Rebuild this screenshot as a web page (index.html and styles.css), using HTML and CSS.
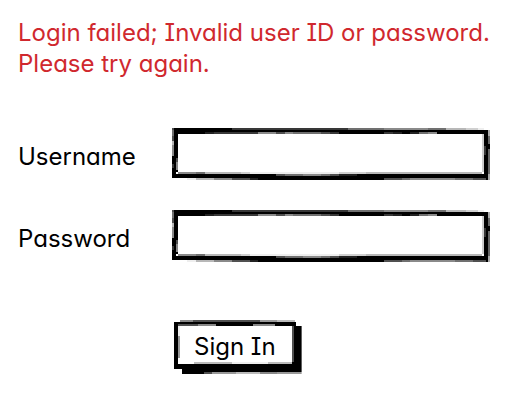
FILE: index.html
```html
<!DOCTYPE html>
<html lang="en">
<head>
<meta charset="utf-8">
<meta name="viewport" content="width=device-width, initial-scale=1">
<title>Sign In</title>
<link rel="stylesheet" href="styles.css">
</head>
<body>
<svg class="defs" aria-hidden="true">
  <symbol id="field-frame" viewBox="0 0 318 52" preserveAspectRatio="none">
    <path d="M2 0H60V2H316V52H86V50H0V28H2ZM6 6V44H4V46H312V6Z" fill="#000" fill-rule="evenodd"/>
    <path d="M312 6H310V44H312Z" fill="#ccc"/>
    <path d="M60 0H176V2H60ZM42 4H86V6H42ZM158 4H167V6H158ZM212 4H221V6H212ZM0 36H2V40H0ZM314 18H312V27H314Z" fill="#383838"/>
    <path d="M176 0H212V2H176ZM256 0H274V2H256ZM121 4H149V6H121ZM247 4H256V6H247ZM0 2H2V8H0ZM24 44H33V46H24ZM113 46H131V48H113ZM149 46H158V48H149ZM230 50H238V52H230ZM283 50H301V52H283Z" fill="#707070"/>
    <path d="M212 0H256V2H212ZM86 4H104V6H86ZM113 4H121V6H113ZM256 4H265V6H256ZM0 17H2V28H0ZM6 44H24V46H6ZM131 46H149V48H131ZM42 50H60V52H42ZM238 50H283V52H238ZM4 34H6V42H4Z" fill="#8a8a8a"/>
    <path d="M274 0H294V2H274ZM0 13H2V17H0ZM33 44H69V46H33ZM194 44H310V46H194ZM24 50H42V52H24Z" fill="#b8b8b8"/>
    <path d="M294 0H306V2H294ZM69 44H78V46H69ZM167 44H194V46H167Z" fill="#d0d0d0"/>
    <path d="M306 0H312V2H306ZM78 44H167V46H78ZM15 50H24V52H15Z" fill="#eee"/>
    <path d="M0 50H15V52H0Z" fill="#fff"/>
    <path d="M0 0H2V2H0ZM0 8H2V13H0ZM104 4H113V6H104ZM149 4H158V6H149ZM4 30H6V34H4ZM104 46H113V48H104ZM158 46H167V48H158ZM60 50H78V52H60ZM212 50H230V52H212ZM301 50H314V52H301Z" fill="#505050"/>
    <path d="M33 4H42V6H33ZM221 4H230V6H221ZM238 4H247V6H238ZM167 46H185V48H167ZM78 50H86V52H78Z" fill="#222"/>
    <path d="M316 2H318V8H316ZM316 46H318V52H316Z" fill="#aaa"/>
    <path d="M316 8H318V16H316ZM316 21H318V46H316Z" fill="#666"/>
    <path d="M316 16H318V21H316Z" fill="#000"/>
  </symbol>
  <symbol id="button-frame" viewBox="0 0 128 54" preserveAspectRatio="none">
    <path d="M0 2H122V6H128V52H30V54H8V49H0ZM4 6V44H118V6Z" fill="#000" fill-rule="evenodd"/>
    <path d="M6 0H19V2H6ZM24 4H42V6H24ZM79 4H101V6H79ZM86 52H103V54H86Z" fill="#888"/>
    <path d="M19 0H86V2H19ZM4 4H24V6H4ZM118 6H120V42H118ZM30 52H38V54H30Z" fill="#505050"/>
    <path d="M86 0H103V2H86ZM38 52H62V54H38ZM103 52H128V54H103ZM4 16H6V38H4Z" fill="#999"/>
    <path d="M103 0H121V2H103ZM20 42H58V44H20ZM94 42H118V44H94ZM62 52H86V54H62Z" fill="#bbb"/>
    <path d="M4 6H6V16H4ZM58 42H94V44H58Z" fill="#eee"/>
  </symbol>
</svg>
<main class="login">
  <p class="error" role="alert">Login failed; Invalid user ID or password. Please try again.</p>
  <form class="form">
    <label class="label" for="username">Username</label>
    <div class="field">
      <svg class="frame" aria-hidden="true"><use href="#field-frame"/></svg>
      <input class="input" id="username" type="text" autocomplete="username">
    </div>
    <label class="label" for="password">Password</label>
    <div class="field">
      <svg class="frame" aria-hidden="true"><use href="#field-frame"/></svg>
      <input class="input" id="password" type="password" autocomplete="current-password">
    </div>
    <button class="button" type="submit">
      <svg class="frame" aria-hidden="true"><use href="#button-frame"/></svg>
      <span class="caption">Sign In</span>
    </button>
  </form>
</main>
</body>
</html>
```
FILE: styles.css
```css
* {
  box-sizing: border-box;
}

body {
  margin: 0;
  background: #fff;
  color: #000;
  font-family: Inter, "Noto Sans", sans-serif;
  font-size: 24px;
  line-height: 31px;
  font-feature-settings: "cv11", "cv08";
}

.defs {
  position: absolute;
  width: 0;
  height: 0;
}

.login {
  padding: 17px 18px 24px;
}

.error {
  margin: 0 0 49px;
  color: #d0282e;
}

.form {
  display: grid;
  grid-template-columns: 146px 1fr;
  column-gap: 8px;
  row-gap: 30px;
  align-items: center;
  padding-right: 8px;
}

.label {
  padding-top: 4px;
}

.field,
.button {
  position: relative;
}

.frame {
  position: absolute;
  inset: 0;
  width: 100%;
  height: 100%;
  shape-rendering: crispEdges;
}

.input {
  position: relative;
  display: block;
  width: 100%;
  height: 52px;
  padding: 8px 16px;
  border: 0;
  background: transparent;
  font: inherit;
}

.button {
  grid-column: 2;
  justify-self: start;
  margin: 28px 0 0 2px;
  padding: 11px 26px 12px 20px;
  border: 0;
  background: transparent;
  color: inherit;
  font: inherit;
  font-feature-settings: inherit;
}

.caption {
  position: relative;
}
```
